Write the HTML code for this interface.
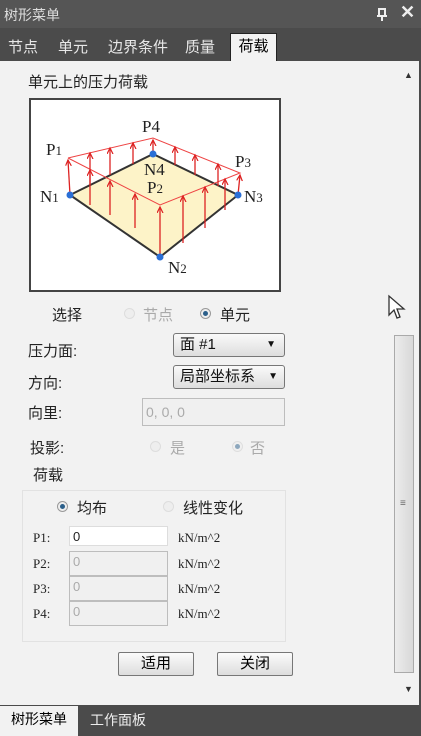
<html><head><style>
body{margin:0;width:421px;height:736px;background:#4b4b4b;font-family:"Liberation Sans","Noto Sans CJK SC",sans-serif;position:relative;overflow:hidden}
.a{position:absolute;white-space:nowrap}
.t{font-size:15px;color:#222}
.g{color:#aaa}
.box{position:absolute;border:1px solid #bdbdbd;background:#f0f0f0;height:20px;font-size:13px;color:#aaa;line-height:20px;padding-left:3px;box-sizing:border-box}
.sel{position:absolute;border:1px solid #777;border-radius:3px;background:linear-gradient(#fafafa,#ddd);height:24px;font-size:15px;line-height:22px;padding-left:6px;box-sizing:border-box;color:#111;white-space:nowrap}
.rad{position:absolute;width:11px;height:11px;border-radius:50%;border:1px solid #999;background:#eee;box-sizing:border-box}
.rad.on::after{content:"";position:absolute;left:2px;top:2px;width:5px;height:5px;border-radius:50%;background:#2b5f8a}
.btn{position:absolute;border:1px solid #777;border-radius:2px;background:linear-gradient(#fbfbfb,#ddd);height:24px;width:76px;text-align:center;font-size:15px;line-height:22px;box-sizing:border-box}
.lb{font-family:"Liberation Serif",serif;font-size:13px;color:#222}
</style></head><body>
<div class="a" style="left:0;top:0;width:421px;height:28px;background:#555"></div>
<div class="a" style="left:4px;top:5px;font-size:14px;color:#ddd">树形菜单</div>
<svg class="a" style="left:376px;top:8px" width="12" height="13"><rect x="3" y="1" width="6" height="7" fill="none" stroke="#eee" stroke-width="2"/><line x1="1" y1="8" x2="11" y2="8" stroke="#eee" stroke-width="2"/><line x1="6" y1="8" x2="6" y2="13" stroke="#eee" stroke-width="2"/></svg>
<div class="a" style="left:400px;top:2px;font-size:18px;color:#eee;font-weight:bold">✕</div>
<div class="a" style="left:8px;top:36px;font-size:15px;color:#e8e8e8">节点</div>
<div class="a" style="left:58px;top:36px;font-size:15px;color:#e8e8e8">单元</div>
<div class="a" style="left:108px;top:36px;font-size:15px;color:#e8e8e8">边界条件</div>
<div class="a" style="left:185px;top:36px;font-size:15px;color:#e8e8e8">质量</div>
<div class="a" style="left:230px;top:33px;width:45px;height:28px;background:#f2f2f2;border:1px solid #222;border-bottom:none;font-size:15px;text-align:center;line-height:26px">荷载</div>
<div class="a" style="left:0;top:61px;width:419px;height:644px;background:#f2f2f2"></div>
<div class="a t" style="left:28px;top:71px">单元上的压力荷载</div>
<div class="a" style="left:29px;top:98px;width:252px;height:194px;border:2px solid #444;background:#fff;box-sizing:border-box"></div>
<svg class="a" style="left:0;top:0" width="300" height="300">
<defs><marker id="m" markerWidth="8" markerHeight="8" refX="6" refY="3" orient="auto" markerUnits="userSpaceOnUse"><path d="M0,0 L6,3 L0,6" fill="none" stroke="#d22" stroke-width="1.2"/></marker></defs>
<polygon points="70,195 153,154 238,195 160,257" fill="#fdf3c8" stroke="#333" stroke-width="2"/>
<polyline points="68,158 153,138 240,173 160,205 68,158" fill="none" stroke="#e44" stroke-width="1"/>
<g stroke="#d22" stroke-width="1.3" marker-end="url(#m)">
<line x1="70" y1="195" x2="68" y2="160"/><line x1="160" y1="257" x2="160" y2="207"/><line x1="238" y1="195" x2="240" y2="175"/><line x1="153" y1="154" x2="153" y2="140"/>
<line x1="90" y1="205" x2="90" y2="170"/><line x1="110" y1="215" x2="110" y2="181"/><line x1="135" y1="228" x2="135" y2="194"/>
<line x1="183" y1="243" x2="183" y2="196"/><line x1="205" y1="228" x2="205" y2="187"/><line x1="225" y1="210" x2="225" y2="179"/>
<line x1="90" y1="185" x2="90" y2="153"/><line x1="110" y1="175" x2="110" y2="148"/><line x1="133" y1="164" x2="133" y2="143"/>
<line x1="175" y1="165" x2="175" y2="147"/><line x1="195" y1="175" x2="195" y2="155"/><line x1="218" y1="186" x2="218" y2="164"/>
</g>
<g fill="#2a6fd6"><circle cx="70" cy="195" r="3.5"/><circle cx="153" cy="154" r="3.5"/><circle cx="238" cy="195" r="3.5"/><circle cx="160" cy="257" r="3.5"/></g>
<g font-family="Liberation Serif" font-size="17" fill="#222">
<text x="46" y="155">P<tspan font-size="13">1</tspan></text><text x="142" y="132">P4</text><text x="235" y="167">P<tspan font-size="13">3</tspan></text>
<text x="147" y="193">P<tspan font-size="13">2</tspan></text><text x="144" y="175">N4</text><text x="40" y="202">N<tspan font-size="13">1</tspan></text>
<text x="244" y="202">N<tspan font-size="13">3</tspan></text><text x="168" y="273">N<tspan font-size="13">2</tspan></text></g>
</svg>
<div class="a t" style="left:52px;top:304px">选择</div>
<div class="rad" style="left:124px;top:308px;border-color:#ddd"></div><div class="a t g" style="left:143px;top:304px">节点</div>
<div class="rad on" style="left:200px;top:308px"></div><div class="a t" style="left:220px;top:304px">单元</div>
<div class="a t" style="left:28px;top:340px">压力面:</div>
<div class="sel" style="left:173px;top:333px;width:112px">面 #1<span class="a" style="right:8px;top:0;font-size:10px">▼</span></div>
<div class="a t" style="left:28px;top:372px">方向:</div>
<div class="sel" style="left:173px;top:365px;width:112px">局部坐标系<span class="a" style="right:6px;top:0;font-size:10px">▼</span></div>
<div class="a t" style="left:28px;top:402px">向里:</div>
<div class="box" style="left:142px;top:398px;width:143px;height:28px;line-height:26px;font-size:14px">0, 0, 0</div>
<div class="a t" style="left:30px;top:437px">投影:</div>
<div class="rad" style="left:150px;top:441px;border-color:#ddd"></div><div class="a t g" style="left:170px;top:437px">是</div>
<div class="rad on" style="left:232px;top:441px;border-color:#ccc;opacity:.5"></div><div class="a t g" style="left:250px;top:437px">否</div>
<div class="a t" style="left:33px;top:464px">荷载</div>
<div class="a" style="left:22px;top:490px;width:262px;height:150px;border:1px solid #e2e2e2"></div>
<div class="rad on" style="left:57px;top:501px"></div><div class="a t" style="left:77px;top:497px">均布</div>
<div class="rad" style="left:163px;top:501px;border-color:#ddd"></div><div class="a t" style="left:183px;top:497px">线性变化</div>
<div class="a lb" style="left:33px;top:530px">P1:</div><div class="box" style="left:69px;top:526px;width:99px;background:#fff;color:#222;border-color:#ddd">0</div><div class="a lb" style="left:178px;top:530px">kN/m^2</div>
<div class="a lb" style="left:33px;top:556px">P2:</div><div class="box" style="left:69px;top:551px;width:99px;height:25px">0</div><div class="a lb" style="left:178px;top:556px">kN/m^2</div>
<div class="a lb" style="left:33px;top:581px">P3:</div><div class="box" style="left:69px;top:576px;width:99px;height:25px">0</div><div class="a lb" style="left:178px;top:581px">kN/m^2</div>
<div class="a lb" style="left:33px;top:606px">P4:</div><div class="box" style="left:69px;top:601px;width:99px;height:25px">0</div><div class="a lb" style="left:178px;top:606px">kN/m^2</div>
<div class="btn" style="left:118px;top:652px">适用</div>
<div class="btn" style="left:217px;top:652px">关闭</div>
<div class="a" style="left:404px;top:70px;font-size:9px;color:#333">▲</div>
<div class="a" style="left:394px;top:335px;width:20px;height:338px;border:1px solid #aaa;background:linear-gradient(90deg,#ececec,#d8d8d8);box-sizing:border-box"></div>
<div class="a" style="left:400px;top:498px;font-size:10px;color:#666">≡</div>
<div class="a" style="left:404px;top:684px;font-size:9px;color:#333">▼</div>
<svg class="a" style="left:387px;top:294px" width="20" height="28"><path d="M2,2 L2,21 L7,16 L10,24 L13,23 L10,15 L17,15 Z" fill="#fff" stroke="#333" stroke-width="1.3"/></svg>
<div class="a" style="left:0;top:706px;width:78px;height:30px;background:#f2f2f2;font-size:14px;line-height:26px;text-align:center">树形菜单</div>
<div class="a" style="left:90px;top:710px;font-size:14px;color:#eee">工作面板</div>
</body></html>
